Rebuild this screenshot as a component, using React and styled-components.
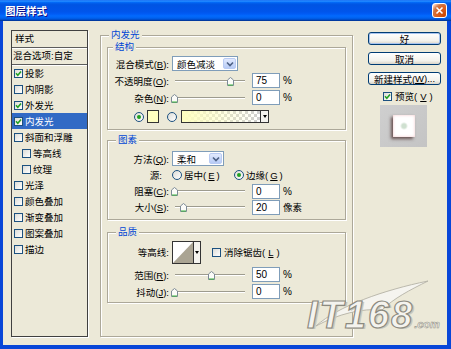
import React from 'react';
import styled, { createGlobalStyle } from 'styled-components';

const GlobalStyle = createGlobalStyle`
  html, body { margin: 0; padding: 0; background: #fff; overflow: hidden; }
  body { font-family: "Liberation Sans", "Noto Sans CJK SC", sans-serif; }
`;

// whole dialog, XP luna frame
const Window = styled.div`
  position: relative;
  width: 451px;
  height: 349px;
  display: flex;
  flex-direction: column;
  font-family: "Liberation Sans", "Noto Sans CJK SC", sans-serif;
  font-size: 9.5px;
  color: #000;
  overflow: hidden;
`;

const TitleBar = styled.div`
  flex: none;
  height: 21px;
  display: flex;
  align-items: center;
  justify-content: space-between;
  padding: 0 4px 0 5px;
  background: linear-gradient(#0058ee 0%, #3593ff 4%, #288eff 6%, #127dff 8%, #036ffc 10%, #0262ee 14%,
    #0057e5 20%, #0054e3 24%, #0055eb 56%, #005bf5 66%, #026afe 76%, #0062ef 86%, #0052d6 92%, #0040ab 96%, #003092 100%);
`;

const Title = styled.span`
  color: #fff;
  font: bold 10.5px "Noto Sans CJK SC", sans-serif;
  text-shadow: 1px 1px #0f1089;
`;

const CloseButton = styled.div`
  width: 15px;
  height: 15px;
  box-sizing: border-box;
  border: 1px solid #fff;
  border-radius: 3px;
  display: flex;
  align-items: center;
  justify-content: center;
  background: radial-gradient(circle at 90% 90%, #cc4600 0%, #dc6527 55%, #cd7546 70%, #ffccb2 90%, #fff 100%);
`;

const Body = styled.div`
  flex: 1;
  display: flex;
  align-items: stretch;
  background: #ece9d8;
  border: solid #0846d8;
  border-width: 0 4px 4px 3px;
  padding: 0 6px 8px 8px;
`;

/* ---- left style list ---- */
const StyleList = styled.div`
  flex: none;
  width: 77px;
  margin-top: 9px;
  box-sizing: border-box;
  border: 1px solid #404040;
  box-shadow: 1px 1px 0 #fff;
  display: flex;
  flex-direction: column;
`;

const ListHeader = styled.div`
  height: 16px;
  line-height: 16px;
  padding-left: ${p => p.$pad}px;
  border-bottom: 1px solid #5c5c5c;
  box-shadow: 0 1px 0 #fff;
  white-space: nowrap;
`;

const ListItem = styled.div`
  height: 16px;
  display: flex;
  align-items: center;
  gap: 2px;
  padding-left: ${p => (p.$sub ? 10 : 2)}px;
  background: ${p => (p.$selected ? '#316ac5' : 'transparent')};
  color: ${p => (p.$selected ? '#fff' : '#000')};
  white-space: nowrap;
  &:first-of-type { margin-top: 1px; }
`;

/* ---- xp form bits ---- */
const CheckBox = styled.span`
  flex: none;
  width: 9px;
  height: 9px;
  box-sizing: border-box;
  border: 1px solid #1c5180;
  background: linear-gradient(135deg, #dcdcd7, #fff);
  display: inline-flex;
  align-items: center;
  justify-content: center;
`;

const Check = ({ on }) => (
  <CheckBox>
    {on && (
      <svg width="7" height="7" viewBox="0 0 7 7">
        <path d="M1 3.3 L2.8 5.2 L6 1.5" fill="none" stroke="#21a121" strokeWidth="1.6" />
      </svg>
    )}
  </CheckBox>
);

const RadioCircle = styled.span`
  flex: none;
  width: 10px;
  height: 10px;
  box-sizing: border-box;
  border: 1px solid #1c5180;
  border-radius: 50%;
  background: linear-gradient(135deg, #dcdcd7, #fff);
  display: inline-flex;
  align-items: center;
  justify-content: center;
  &::after {
    content: '';
    width: 4px;
    height: 4px;
    border-radius: 50%;
    background: ${p => (p.$on ? '#21a121' : 'transparent')};
  }
`;

const Fieldset = styled.fieldset`
  margin: ${p => p.$mt || 0}px 0 0 0;
  padding: ${p => p.$pad};
  min-width: 0;
  box-sizing: border-box;
  border: 1px solid #aca899;
  box-shadow: inset 1px 1px 0 #fff, 1px 1px 0 #fff;
`;

const Legend = styled.legend`
  margin-left: ${p => p.$ml}px;
  padding: 0 2px;
  line-height: 12px;
  color: #0046d5;
  background: #ece9d8;
`;

const OuterPanel = styled(Fieldset)`
  flex: none;
  width: 253px;
  margin: 8px 0 0 12px;
`;

const Row = styled.div`
  display: flex;
  align-items: center;
  height: ${p => p.$h || 17}px;
  margin-top: ${p => p.$mt || 0}px;
  padding-left: ${p => p.$pl || 0}px;
  white-space: nowrap;
`;

const Label = styled.span`
  flex: none;
  width: 61px;
  box-sizing: border-box;
  padding-right: ${p => p.$pr || 0}px;
  margin-right: 3px;
  text-align: right;
`;

const Select = styled.div`
  flex: none;
  width: ${p => p.$w}px;
  height: 15px;
  box-sizing: border-box;
  border: 1px solid #7f9db9;
  background: #fff;
  display: flex;
  align-items: center;
  padding: 1px;
`;

const SelectText = styled.span`
  flex: 1;
  padding-left: 3px;
`;

const SelectArrow = styled.span`
  flex: none;
  width: 13px;
  height: 11px;
  box-sizing: border-box;
  border: 1px solid #b9cbf3;
  border-radius: 2px;
  background: linear-gradient(#e2eafe, #b7cbf6);
  display: flex;
  align-items: center;
  justify-content: center;
`;

const Slider = styled.div`
  position: relative;
  flex: none;
  width: 77px;
  height: 12px;
  box-sizing: border-box;
  padding: 0 4px 0 3px;
  display: flex;
  align-items: center;
`;

const Track = styled.div`
  flex: 1;
  height: 0;
  border-top: 1px solid #9d9b8e;
  border-bottom: 1px solid #fff;
`;

const Thumb = styled.svg`
  position: absolute;
  top: 2px;
`;

const NumberBox = styled.div`
  flex: none;
  width: 28px;
  height: 15px;
  margin-left: 3px;
  box-sizing: border-box;
  border: 1px solid #7f9db9;
  background: #fff;
  padding-left: 3px;
  font-size: 10px;
  line-height: 13px;
`;

const Unit = styled.span`
  margin-left: 3px;
  font-size: ${p => (p.$small ? 9.5 : 10)}px;
`;

const RadioOption = styled.span`
  display: inline-flex;
  align-items: center;
  gap: 2px;
  min-width: ${p => p.$w || 0}px;
`;

const Swatch = styled.span`
  flex: none;
  width: 12px;
  height: 13px;
  margin: 0 8px 0 3px;
  box-sizing: border-box;
  border: 1px solid #333;
  background: #ffffc0;
`;

const GradientSwatch = styled.span`
  flex: none;
  width: 80px;
  height: 13px;
  margin-left: 4px;
  box-sizing: border-box;
  border: 1px solid #333;
  background:
    linear-gradient(to right, #ffffc0, rgba(255, 255, 192, 0)),
    conic-gradient(#cfcfcf 25%, #fff 0 50%, #cfcfcf 0 75%, #fff 0) 0 0 / 6px 6px;
`;

const MiniArrow = styled.span`
  flex: none;
  width: ${p => p.$w}px;
  height: ${p => p.$h}px;
  box-sizing: border-box;
  border: 1px solid #333;
  border-left: none;
  background: #f4f3ee;
  display: flex;
  align-items: center;
  justify-content: center;
  &::after {
    content: '';
    border: 2px solid transparent;
    border-top: 3px solid #000;
    border-bottom: none;
  }
`;

const ContourBox = styled.span`
  flex: none;
  width: 22px;
  height: 23px;
  box-sizing: border-box;
  border: 1px solid #333;
  background: #fff;
  display: flex;
`;

const ContourCheck = styled.span`
  display: inline-flex;
  align-items: center;
  gap: 3px;
  margin-left: 11px;
`;

/* ---- right column ---- */
const RightColumn = styled.div`
  flex: none;
  width: 73px;
  margin: 11px 0 0 15px;
  display: flex;
  flex-direction: column;
  gap: 7px;
`;

const Button = styled.div`
  height: 13px;
  box-sizing: border-box;
  border: 1px solid #003c74;
  border-radius: 3px;
  background: linear-gradient(#fff, #f3f2ec 70%, #d9d4c8);
  box-shadow: ${p => (p.$default ? 'inset 0 0 0 1px #a8c4ef' : 'none')};
  display: flex;
  align-items: center;
  justify-content: center;
  white-space: nowrap;
`;

const PreviewToggle = styled.div`
  display: flex;
  align-items: center;
  gap: 3px;
  height: 12px;
  margin-top: -2px;
  padding-left: 15px;
`;

const PreviewBox = styled.div`
  width: 47px;
  height: 42px;
  margin: -4px 0 0 12px;
  background: linear-gradient(135deg, #cfcfcf, #c4c4c4);
  display: flex;
  align-items: center;
  justify-content: center;
`;

const PreviewLayer = styled.div`
  width: 22px;
  height: 22px;
  background: radial-gradient(circle, #cfe0d0 0 2px, #fff 4px);
  box-shadow: inset 0 0 3px #f2c6c9, -2px 2px 3px rgba(60, 30, 30, 0.7);
`;

/* ---- watermark over the corner ---- */
const Watermark = styled.div`
  position: absolute;
  left: 298px;
  top: 276px;
  width: 147px;
  height: 67px;
  display: flex;
  align-items: flex-end;
  padding-left: 9px;
  box-sizing: border-box;
  pointer-events: none;
`;

const Swoosh = styled.svg`
  position: absolute;
  left: 0;
  top: 0;
`;

const MarkText = styled.span`
  position: relative;
  font: italic bold 38px/38px "Liberation Sans", sans-serif;
  letter-spacing: 2px;
  color: #f4f3ee;
  -webkit-text-stroke: 1.2px #8c8a80;
  text-shadow: 2px 1px 0 #c9c7bb;
`;

const MarkDomain = styled.span`
  font-size: 11px;
  letter-spacing: 0;
  -webkit-text-stroke: 0.6px #9a988d;
  text-shadow: none;
`;

const styleItems = [
  { name: '投影', checked: true },
  { name: '内阴影' },
  { name: '外发光', checked: true },
  { name: '内发光', checked: true, selected: true },
  { name: '斜面和浮雕' },
  { name: '等高线', sub: true },
  { name: '纹理', sub: true },
  { name: '光泽' },
  { name: '颜色叠加' },
  { name: '渐变叠加' },
  { name: '图案叠加' },
  { name: '描边' },
];

const Arrow = () => (
  <SelectArrow>
    <svg width="8" height="6" viewBox="0 0 8 6">
      <path d="M1 1.5 L4 4.5 L7 1.5" fill="none" stroke="#4d6185" strokeWidth="1.6" />
    </svg>
  </SelectArrow>
);

const SliderField = ({ frac }) => (
  <Slider>
    <Track />
    <Thumb width="7" height="9" viewBox="0 0 7 9" style={{ left: frac * 75 - 1.5 }}>
      <path d="M0.5 8.5 V3 L3.5 0.5 L6.5 3 V8.5 Z" fill="#fbfbf8" stroke="#7d8a96" />
      <path d="M1 8 H6" stroke="#3cb43c" />
    </Thumb>
  </Slider>
);

const Mn = ({ text, k }) => (
  <>
    {text}(<u>{k}</u>)
  </>
);

export default function App() {
  return (
    <>
      <GlobalStyle />
      <Window>
        <TitleBar>
          <Title>图层样式</Title>
          <CloseButton>
            <svg width="9" height="9" viewBox="0 0 9 9">
              <path d="M1.5 1.5 L7.5 7.5 M7.5 1.5 L1.5 7.5" stroke="#fff" strokeWidth="1.6" />
            </svg>
          </CloseButton>
        </TitleBar>

        <Body>
          <StyleList>
            <ListHeader $pad={3}>样式</ListHeader>
            <ListHeader $pad={1}>混合选项:自定</ListHeader>
            {styleItems.map(item => (
              <ListItem key={item.name} $sub={item.sub} $selected={item.selected}>
                <Check on={item.checked} />
                {item.name}
              </ListItem>
            ))}
          </StyleList>

          <OuterPanel as="fieldset" $pad="0 6px">
            <Legend $ml={2}>内发光</Legend>

            <Fieldset $pad="2px 0 4px 0">
              <Legend $ml={5}>结构</Legend>
              <Row>
                <Label><Mn text="混合模式" k="B" />:</Label>
                <Select $w={66}>
                  <SelectText>颜色减淡</SelectText>
                  <Arrow />
                </Select>
              </Row>
              <Row>
                <Label><Mn text="不透明度" k="O" />:</Label>
                <SliderField frac={0.75} />
                <NumberBox>75</NumberBox>
                <Unit>%</Unit>
              </Row>
              <Row>
                <Label><Mn text="杂色" k="N" />:</Label>
                <SliderField frac={0} />
                <NumberBox>0</NumberBox>
                <Unit>%</Unit>
              </Row>
              <Row $mt={2} $pl={26}>
                <RadioCircle $on />
                <Swatch />
                <RadioCircle />
                <GradientSwatch />
                <MiniArrow $w={8} $h={13} />
              </Row>
            </Fieldset>

            <Fieldset $mt={4} $pad="4px 0 4px 0">
              <Legend $ml={8}>图素</Legend>
              <Row>
                <Label><Mn text="方法" k="Q" />:</Label>
                <Select $w={52}>
                  <SelectText>柔和</SelectText>
                  <Arrow />
                </Select>
              </Row>
              <Row $h={16}>
                <Label $pr={7}>源:</Label>
                <RadioOption $w={62}>
                  <RadioCircle />
                  <Mn text="居中" k="E" />
                </RadioOption>
                <RadioOption>
                  <RadioCircle $on />
                  <Mn text="边缘" k="G" />
                </RadioOption>
              </Row>
              <Row $h={16}>
                <Label><Mn text="阻塞" k="C" />:</Label>
                <SliderField frac={0} />
                <NumberBox>0</NumberBox>
                <Unit>%</Unit>
              </Row>
              <Row $h={16}>
                <Label><Mn text="大小" k="S" />:</Label>
                <SliderField frac={0.13} />
                <NumberBox>20</NumberBox>
                <Unit $small>像素</Unit>
              </Row>
            </Fieldset>

            <Fieldset $mt={6} $pad="2px 0 2px 0">
              <Legend $ml={8}>品质</Legend>
              <Row $h={24}>
                <Label>等高线:</Label>
                <ContourBox>
                  <svg width="20" height="21" viewBox="0 0 20 21">
                    <path d="M0 21 L20 0 L20 21 Z" fill="#aaa493" />
                  </svg>
                </ContourBox>
                <MiniArrow $w={7} $h={23} />
                <ContourCheck>
                  <Check />
                  <Mn text="消除锯齿" k="L" />
                </ContourCheck>
              </Row>
              <Row $mt={2}>
                <Label><Mn text="范围" k="R" />:</Label>
                <SliderField frac={0.5} />
                <NumberBox>50</NumberBox>
                <Unit>%</Unit>
              </Row>
              <Row>
                <Label><Mn text="抖动" k="J" />:</Label>
                <SliderField frac={0} />
                <NumberBox>0</NumberBox>
                <Unit>%</Unit>
              </Row>
            </Fieldset>
          </OuterPanel>

          <RightColumn>
            <Button $default>好</Button>
            <Button>取消</Button>
            <Button><Mn text="新建样式" k="W" />...</Button>
            <PreviewToggle>
              <Check on />
              <Mn text="预览" k="V" />
            </PreviewToggle>
            <PreviewBox>
              <PreviewLayer />
            </PreviewBox>
          </RightColumn>
        </Body>

        <Watermark>
          <Swoosh width="147" height="67" viewBox="0 0 147 67">
            <path d="M18 50 C 40 30, 86 14, 130 5 C 112 14, 96 22, 84 34 C 64 32, 40 38, 18 50 Z"
              fill="#f5f4ef" stroke="#b4b2a6" strokeWidth="0.9" />
          </Swoosh>
          <MarkText>
            IT168<MarkDomain>.com</MarkDomain>
          </MarkText>
        </Watermark>
      </Window>
    </>
  );
}
